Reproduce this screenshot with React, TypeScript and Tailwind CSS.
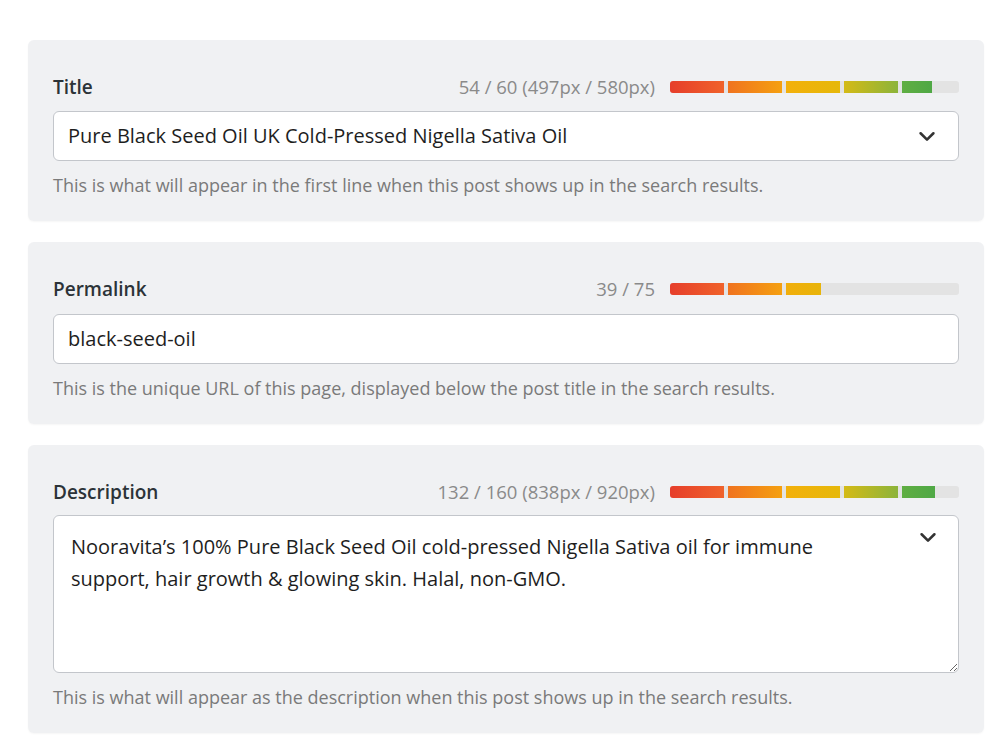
import React from 'react';

type Segment = { width: number; from: string; to: string };

const full: Segment[] = [
  { width: 54, from: '#e63e2b', to: '#f0622a' },
  { width: 54, from: '#f0731f', to: '#f5a010' },
  { width: 54, from: '#f3b00b', to: '#e6b80a' },
  { width: 54, from: '#d4ba16', to: '#8cb43a' },
];

function ScoreBar({ segments }: { segments: Segment[] }) {
  return (
    <div className="flex h-[12px] w-[289px] gap-[4px] overflow-hidden rounded-[3px] bg-[#e3e3e3]">
      {segments.map((s, i) => (
        <div
          key={i}
          className="h-full"
          style={{ width: s.width, background: `linear-gradient(to right, ${s.from}, ${s.to})` }}
        />
      ))}
    </div>
  );
}

function Chevron() {
  return (
    <svg width="22" height="22" viewBox="0 0 24 24" fill="none" stroke="#333" strokeWidth={2.8} strokeLinecap="round" strokeLinejoin="round">
      <path d="M5 9l7 7 7-7" />
    </svg>
  );
}

function FieldHeader({ label, counter, segments }: { label: string; counter: string; segments: Segment[] }) {
  return (
    <div className="flex h-[24px] items-center">
      <span className="text-[19px] font-semibold text-[#2c3338]">{label}</span>
      <span className="ml-auto mr-[15px] text-[18.5px] text-[#8a8a8a]">{counter}</span>
      <ScoreBar segments={segments} />
    </div>
  );
}

function Panel({ children }: { children: React.ReactNode }) {
  return (
    <section className="rounded-[6px] bg-[#f0f1f3] px-[25px] pt-[35px] pb-[24px] shadow-[0_1px_2px_rgba(0,0,0,0.04)]">
      {children}
    </section>
  );
}

function Help({ children }: { children: React.ReactNode }) {
  return <p className="mt-[12px] text-[18px] leading-[24px] text-[#7a7a7a]">{children}</p>;
}

export default function App() {
  return (
    <div className="min-h-[750px] bg-white px-[28px] pt-[40px] pr-[16px]" style={{ fontFamily: '"Open Sans", "Noto Sans", sans-serif' }}>
      <div className="flex flex-col gap-[21px]">
        <Panel>
          <FieldHeader
            label="Title"
            counter="54 / 60 (497px / 580px)"
            segments={[...full, { width: 30, from: '#5fae42', to: '#4fa845' }]}
          />
          <div className="mt-[12px] flex h-[50px] items-center rounded-[6px] border border-[#c3c6cb] bg-white pl-[14px] pr-[20px]">
            <span className="text-[20px] text-[#1e1e1e]">Pure Black Seed Oil UK Cold-Pressed Nigella Sativa Oil</span>
            <span className="ml-auto flex items-center">
              <Chevron />
            </span>
          </div>
          <Help>This is what will appear in the first line when this post shows up in the search results.</Help>
        </Panel>

        <Panel>
          <FieldHeader label="Permalink" counter="39 / 75" segments={[full[0], full[1], { width: 35, from: '#f1ae0b', to: '#e8b40a' }]} />
          <div className="mt-[13px] flex h-[50px] items-center rounded-[6px] border border-[#c3c6cb] bg-white pl-[14px]">
            <span className="text-[20px] text-[#1e1e1e]">black-seed-oil</span>
          </div>
          <Help>This is the unique URL of this page, displayed below the post title in the search results.</Help>
        </Panel>

        <Panel>
          <FieldHeader
            label="Description"
            counter="132 / 160 (838px / 920px)"
            segments={[...full, { width: 33, from: '#5fae42', to: '#4fa845' }]}
          />
          <div className="relative mt-[11px]">
            <textarea
              readOnly
              defaultValue="Nooravita’s 100% Pure Black Seed Oil cold-pressed Nigella Sativa oil for immune support, hair growth & glowing skin. Halal, non-GMO."
              className="block h-[158px] w-full resize-y rounded-[6px] border border-[#c3c6cb] bg-white pt-[15px] pr-[80px] pl-[17px] text-[20px] leading-[32px] text-[#1e1e1e] outline-none"
            />
            <span className="absolute top-[11px] right-[20px] flex">
              <Chevron />
            </span>
          </div>
          <Help>This is what will appear as the description when this post shows up in the search results.</Help>
        </Panel>
      </div>
    </div>
  );
}
